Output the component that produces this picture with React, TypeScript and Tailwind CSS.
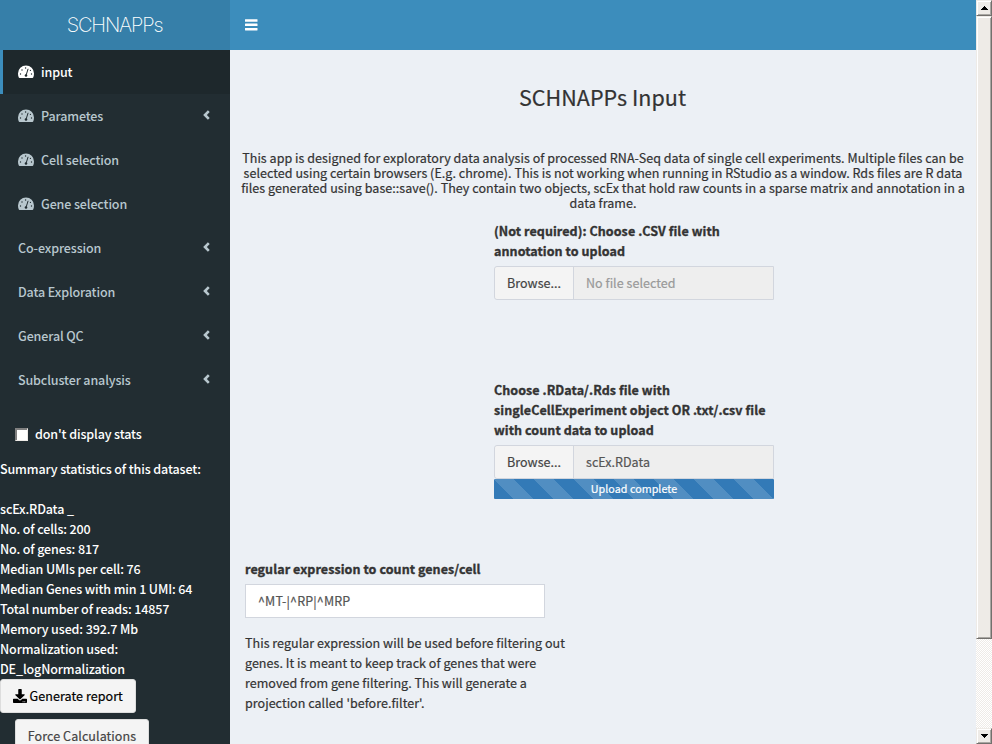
import type { ReactNode } from 'react';
import { FaDownload } from 'react-icons/fa';

type MenuItem = { label: string; icon?: boolean; expandable?: boolean; active?: boolean };

const menu: MenuItem[] = [
  { label: 'input', icon: true, active: true },
  { label: 'Parametes', icon: true, expandable: true },
  { label: 'Cell selection', icon: true },
  { label: 'Gene selection', icon: true },
  { label: 'Co-expression', expandable: true },
  { label: 'Data Exploration', expandable: true },
  { label: 'General QC', expandable: true },
  { label: 'Subcluster analysis', expandable: true },
];

const stats = [
  'scEx.RData _',
  'No. of cells: 200',
  'No. of genes: 817',
  'Median UMIs per cell: 76',
  'Median Genes with min 1 UMI: 64',
  'Total number of reads: 14857',
  'Memory used: 392.7 Mb',
  'Normalization used:',
  'DE_logNormalization',
];

const bold = 'font-bold tracking-[0.07px] [-webkit-text-stroke:0.35px_#333]';

function Lines({ lines, className = '' }: { lines: string[]; className?: string }) {
  return (
    <div className={className}>
      {lines.map((line) => (
        <div key={line} className="whitespace-nowrap">{line}</div>
      ))}
    </div>
  );
}

function GaugeIcon({ hole }: { hole: string }) {
  return (
    <svg className="mr-[7px] shrink-0" width="16" height="14" viewBox="0 0 16 14">
      <path d="M8 .5a8 8 0 0 0-8 8c0 1.500.300 2.900.800 4.100.1.300.400.500.700.500h13c.300 0 .600-.200.700-.500.500-1.200.800-2.600.800-4.100a8 8 0 0 0-8-8z" fill="currentColor" />
      <g fill={hole}>
        <circle cx="2.500" cy="9" r=".7" />
        <circle cx="4" cy="5" r=".7" />
        <circle cx="7.600" cy="3" r=".7" />
        <circle cx="13.500" cy="9" r=".7" />
        <circle cx="12.400" cy="5.400" r=".6" />
      </g>
      <path d="M10 4.200 8.300 9.600" stroke={hole} strokeWidth="1" strokeLinecap="round" />
      <circle cx="8" cy="10.500" r="1.300" fill={hole} />
    </svg>
  );
}

function FileInput({ name, muted }: { name: string; muted?: boolean }) {
  return (
    <div className="flex h-[34px] w-[280px] border border-[#d2d6de] bg-[#eee] rounded-l-[3px]">
      <div className="flex w-[79px] items-center rounded-l-[3px] border-r border-[#d2d6de] bg-[#f4f4f4] pl-3 text-[#444]">Browse...</div>
      <div className={`flex items-center pl-3 ${muted ? 'text-[#999]' : 'text-[#555]'}`}>{name}</div>
    </div>
  );
}

function ScrollButton({ children }: { children: ReactNode }) {
  return (
    <div className="flex h-4 w-4 items-center justify-center border border-t-[#eeebe7] border-l-[#eeebe7] border-r-[#72706d] border-b-[#72706d] bg-[#eeebe7] shadow-[inset_1px_1px_#fff,inset_-1px_-1px_#a9a7a3]">
      {children}
    </div>
  );
}

function Scrollbar() {
  return (
    <div className="flex h-full w-4 shrink-0 flex-col bg-[repeating-conic-gradient(#eeebe7_0_25%,#fff_0_50%)] bg-[length:2px_2px]">
      <ScrollButton>
        <svg width="7" height="4" viewBox="0 0 7 4" shapeRendering="crispEdges"><path d="M3 0h1v1h1v1h1v1h1v1H0V3h1V2h1V1h1z" /></svg>
      </ScrollButton>
      <div className="h-[623px] border border-t-[#eeebe7] border-l-[#eeebe7] border-r-[#72706d] border-b-[#72706d] bg-[#eeebe7] shadow-[inset_1px_1px_#fff,inset_-1px_-1px_#a9a7a3]" />
      <div className="mt-auto">
        <ScrollButton>
          <svg width="7" height="4" viewBox="0 0 7 4" shapeRendering="crispEdges"><path d="M0 0h7v1H6v1H5v1H4v1H3V3H2V2H1V1H0z" /></svg>
        </ScrollButton>
      </div>
    </div>
  );
}

export default function App() {
  return (
    <div className="flex h-[744px] w-[992px] overflow-hidden bg-[#ecf0f5] font-['Noto_Sans_CJK_SC',sans-serif] text-[12.53px] leading-5 tracking-[0.035px] text-[#333]">
      <aside className="flex w-[230px] shrink-0 flex-col bg-[#222d32] font-medium tracking-[-0.125px]">
        <div className="flex h-[50px] shrink-0 items-center justify-center bg-[#367fa9] pr-[1px] font-['Inter',sans-serif] text-[20px] font-extralight tracking-[-1.15px] text-white">SCHNAPPs</div>
        <nav>
          {menu.map((item) => (
            <div
              key={item.label}
              className={`flex h-11 items-center border-l-[3px] pl-[15px] pr-5 ${item.active ? 'border-[#3c8dbc] bg-[#1e282c] text-white' : 'border-transparent text-[#b8c7ce]'}`}
            >
              {item.icon && <GaugeIcon hole={item.active ? '#1e282c' : '#222d32'} />}
              <span>{item.label}</span>
              {item.expandable && (
                <svg className="mb-[3px] ml-auto" width="7" height="10" viewBox="0 0 7 10" fill="none" stroke="currentColor" strokeWidth="2.600">
                  <path d="M5.800 1.200 2 5l3.800 3.800" />
                </svg>
              )}
            </div>
          ))}
        </nav>
        <div className="text-white">
          <div className="mt-[22px] flex h-5 items-center pl-[15px]">
            <div className="mr-[7px] size-[13px] border border-t-[#808080] border-l-[#808080] border-r-[#eeebe7] border-b-[#eeebe7] bg-white shadow-[inset_1px_1px_#808080]" />
            don't display stats
          </div>
          <div className="mt-[15px]">Summary statistics of this dataset:</div>
          <Lines className="mt-5" lines={stats} />
        </div>
        <div className="flex h-[34px] w-[136px] shrink-0 items-center rounded-[3px] border border-[#ddd] bg-[#f4f4f4] pl-3 font-normal tracking-[0.07px] text-black [-webkit-text-stroke:0.2px]">
          <FaDownload className="mr-[2.5px] size-[14px]" />
          Generate report
        </div>
        <div className="ml-[15px] mt-[6px] flex h-[34px] w-[134px] shrink-0 items-center justify-center rounded-[3px] border border-[#ddd] bg-[#f4f4f4] font-normal tracking-[0.07px] text-[#444] [-webkit-text-stroke:0.2px]">
          Force Calculations
        </div>
      </aside>
      <div className="flex min-w-0 flex-1 flex-col [-webkit-text-stroke:0.2px]">
        <header className="flex h-[50px] shrink-0 items-center bg-[#3c8dbc] pl-[15px] text-white">
          <svg width="13" height="12" viewBox="0 0 13 12" fill="currentColor">
            <rect y=".3" width="12.500" height="2.500" rx=".3" />
            <rect y="4.600" width="12.500" height="2.500" rx=".3" />
            <rect y="8.900" width="12.500" height="2.500" rx=".3" />
          </svg>
        </header>
        <main className="flex flex-1 flex-col">
          <h1 className="mt-[34px] h-[26px] pr-[1px] text-center text-[21.5px] leading-[26px]">SCHNAPPs Input</h1>
          <Lines
            className="mt-10 text-center leading-[15px]"
            lines={[
              'This app is designed for exploratory data analysis of processed RNA-Seq data of single cell experiments. Multiple files can be',
              'selected using certain browsers (E.g. chrome). This is not working when running in RStudio as a window. Rds files are R data',
              'files generated using base::save(). They contain two objects, scEx that hold raw counts in a sparse matrix and annotation in a',
              'data frame.',
            ]}
          />
          <section className="ml-[264px] mt-[11px]">
            <Lines className={`mb-[5px] ${bold}`} lines={['(Not required): Choose .CSV file with', 'annotation to upload']} />
            <FileInput name="No file selected" muted />
          </section>
          <section className="ml-[264px] mt-20">
            <Lines className={`mb-[5px] ${bold}`} lines={['Choose .RData/.Rds file with', 'singleCellExperiment object OR .txt/.csv file', 'with count data to upload']} />
            <FileInput name="scEx.RData" />
            <div className="h-5 w-[280px] rounded-[1px] bg-[#337ab7] bg-[linear-gradient(45deg,rgba(255,255,255,.15)_25%,transparent_25%,transparent_50%,rgba(255,255,255,.15)_50%,rgba(255,255,255,.15)_75%,transparent_75%,transparent)] bg-[length:40px_40px] text-center text-[10.74px] leading-5 text-white">
              Upload complete
            </div>
          </section>
          <section className="ml-[15px] mt-[60px]">
            <div className={`mb-[5px] ${bold}`}>regular expression to count genes/cell</div>
            <div className="flex h-[34px] w-[300px] items-center border border-[#d2d6de] bg-white pl-3 tracking-[0.15px] text-[#555]">^MT-|^RP|^MRP</div>
            <Lines
              className="mt-[15px]"
              lines={[
                'This regular expression will be used before filtering out',
                'genes. It is meant to keep track of genes that were',
                'removed from gene filtering. This will generate a',
                "projection called 'before.filter'.",
              ]}
            />
          </section>
        </main>
      </div>
      <Scrollbar />
    </div>
  );
}
